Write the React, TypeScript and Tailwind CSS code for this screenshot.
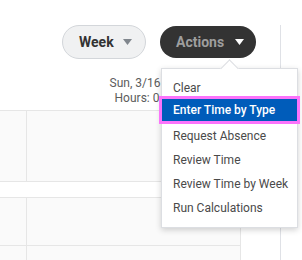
import React from "react";

const Caret = ({ color }: { color: string }) => (
  <svg width="9" height="6" viewBox="0 0 9 6" className="block">
    <path d="M0 0 L9 0 L4.5 6 Z" fill={color} />
  </svg>
);

export default function App() {
  const items = [
    "Clear",
    "Enter Time by Type",
    "Request Absence",
    "Review Time",
    "Review Time by Week",
    "Run Calculations",
  ];
  return (
    <div className="relative w-[302px] h-[260px] overflow-hidden bg-white font-['Roboto',sans-serif]">
      <div className="pt-[25px]">
        <div className="w-[281px] h-[235px] border-r border-[#dfe1e6]">
          {/* toolbar */}
          <div className="flex items-center justify-end gap-[14px] pr-[24px]">
            <button className="flex items-center h-[34px] w-[84px] rounded-full border border-[#d3d6da] bg-[#f0f1f2] pl-[16px] pr-[13px] justify-between">
              <span className="text-[14px] font-bold text-[#333333] leading-none">Week</span>
              <Caret color="#80868d" />
            </button>
            <button className="flex items-center h-[32px] w-[96px] rounded-full bg-[#333333] pl-[16px] pr-[12px] justify-between">
              <span className="text-[14px] font-bold text-[#9e9e9e] leading-none">Actions</span>
              <Caret color="#ffffff" />
            </button>
          </div>
          {/* day header */}
          <div className="flex mt-[17px]">
            <div className="w-[27px]" />
            <div className="w-[214px] text-center text-[12px] leading-[15px] text-[#5c5c5c] whitespace-nowrap">
              <div className="pl-[2px]">Sun, 3/16</div>
              <div className="pl-[6px]">Hours: 0</div>
            </div>
          </div>
          {/* grid block 1 */}
          <div className="mt-[4px] w-[241px] h-[72px] border-y border-r border-[#e6e6e6] flex bg-[#fafafa]">
            <div className="w-[27px] h-full border-r border-[#e6e6e6]" />
            <div className="flex-1" />
          </div>
          {/* grid block 2 */}
          <div className="mt-[15px] w-[241px] border-t border-r border-[#e6e6e6] bg-[#fafafa]">
            <div className="flex h-[48px] border-b border-[#e6e6e6]">
              <div className="w-[27px] border-r border-[#e6e6e6]" />
              <div className="flex-1" />
            </div>
            <div className="flex h-[30px]">
              <div className="w-[27px] border-r border-[#e6e6e6]" />
              <div className="flex-1" />
            </div>
          </div>
        </div>
      </div>

      {/* dropdown menu */}
      <div className="absolute left-[161px] top-[68px] w-[137px] h-[160px] bg-white border border-[#dcdee2] shadow-[0_2px_6px_rgba(0,0,0,0.18)]">
        <div className="absolute left-[61px] -top-[7px] w-[13px] h-[13px] rotate-45 bg-white border-l border-t border-[#dcdee2]" />
        <div className="relative pt-[7px]">
          {items.map((it, i) =>
            i === 1 ? (
              <div
                key={it}
                className="-mt-px mb-[3px] h-[22px] flex items-center pl-[11px] bg-[#005cba] outline-[3px] outline-solid outline-[#fb73fb] text-[12px] font-medium text-white whitespace-nowrap"
              >
                {it}
              </div>
            ) : (
              <div
                key={it}
                className="h-[24px] flex items-center pl-[11px] text-[12px] text-[#4a4a4a] whitespace-nowrap"
              >
                {it}
              </div>
            )
          )}
        </div>
      </div>
    </div>
  );
}
